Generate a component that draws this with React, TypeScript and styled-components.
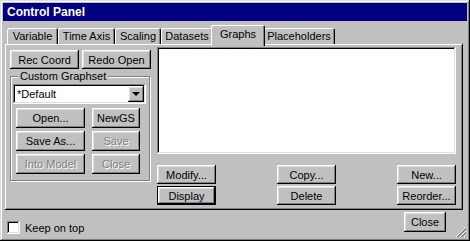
import styled, { createGlobalStyle } from "styled-components";

const GlobalStyle = createGlobalStyle`
  html, body {
    margin: 0;
    padding: 0;
    background: #c0c0c0;
  }
  body {
    font-family: "Liberation Sans", Arial, sans-serif;
    font-size: 11px;
    color: #000;
  }
`;

const raised = `
  box-shadow: inset -1px -1px #000, inset 1px 1px #fff, inset -2px -2px #808080, inset 2px 2px #dfdfdf;
`;

const sunken = `
  box-shadow: inset -1px -1px #fff, inset 1px 1px #808080, inset -2px -2px #dfdfdf, inset 2px 2px #000;
`;

const Window = styled.div`
  position: relative;
  width: 470px;
  height: 241px;
  box-sizing: border-box;
  padding: 3px;
  background: #c0c0c0;
  box-shadow: inset -1px -1px #000, inset 1px 1px #dfdfdf, inset -2px -2px #808080, inset 2px 2px #fff;
  display: flex;
  flex-direction: column;
`;

const TitleBar = styled.div`
  height: 18px;
  background: #000080;
  color: #fff;
  font-weight: bold;
  font-size: 12px;
  line-height: 18px;
  padding-left: 4px;
`;

const TabRow = styled.div`
  display: flex;
  align-items: flex-end;
  height: 21px;
  margin-top: 2px;
  padding-left: 4px;
`;

const Tab = styled.div<{ $w: number; $active?: boolean }>`
  position: relative;
  box-sizing: border-box;
  width: ${(p) => p.$w + (p.$active ? 4 : 0)}px;
  height: ${(p) => (p.$active ? 21 : 16)}px;
  margin: ${(p) => (p.$active ? "0 -2px -2px" : "0")};
  z-index: ${(p) => (p.$active ? 1 : 0)};
  background: #c0c0c0;
  border-radius: 2px 2px 0 0;
  box-shadow: inset 1px 1px #fff, inset -1px 0 #000, inset -2px 0 #808080;
  text-align: center;
  line-height: ${(p) => (p.$active ? 18 : 16)}px;
  white-space: nowrap;
`;

const Panel = styled.div`
  height: 166px;
  margin: 0 4px 0 2px;
  box-sizing: border-box;
  padding: 3px 7px 0 5px;
  display: flex;
  align-items: flex-start;
  box-shadow: inset -1px -1px #000, inset 1px 1px #fff, inset -2px -2px #808080;
`;

const LeftCol = styled.div`
  width: 141px;
  padding-top: 3px;
`;

const RightCol = styled.div`
  width: 299px;
  margin-left: 6px;
`;

const Row = styled.div<{ $gap: number }>`
  display: flex;
  gap: ${(p) => p.$gap}px;
`;

const Button = styled.button<{ $w: number; $h?: number; $default?: boolean }>`
  width: ${(p) => p.$w}px;
  height: ${(p) => p.$h ?? 19}px;
  padding: 0;
  border: none;
  background: #c0c0c0;
  font: inherit;
  color: #000;
  white-space: nowrap;
  ${(p) =>
    p.$default
      ? "box-shadow: inset 0 0 0 1px #000, inset -2px -2px #000, inset 2px 2px #fff, inset -3px -3px #808080, inset 3px 3px #dfdfdf;"
      : raised}
  &:disabled {
    color: #808080;
    text-shadow: 1px 1px 0 #fff;
  }
`;

const GroupBox = styled.div`
  position: relative;
  width: 138px;
  height: 103px;
  margin-top: 7px;
  border: 1px solid #808080;
  box-shadow: inset 1px 1px #fff, 1px 1px #fff;
`;

const Legend = styled.span`
  position: absolute;
  top: -7px;
  left: 7px;
  padding: 0 2px;
  background: #c0c0c0;
  line-height: 13px;
`;

const Combo = styled.div`
  width: 133px;
  height: 20px;
  margin: 7px 0 0 2px;
  box-sizing: border-box;
  background: #fff;
  ${sunken}
  display: flex;
  align-items: center;
  padding: 0 2px 0 4px;
`;

const ComboText = styled.span`
  flex: 1;
`;

const ComboButton = styled.div`
  width: 16px;
  height: 16px;
  background: #c0c0c0;
  ${raised}
  display: flex;
  align-items: center;
  justify-content: center;
`;

const Arrow = styled.div`
  width: 0;
  height: 0;
  border-left: 4px solid transparent;
  border-right: 4px solid transparent;
  border-top: 4px solid #000;
`;

const GroupGrid = styled.div`
  display: grid;
  grid-template-columns: 69px 48px;
  grid-auto-rows: 20px;
  column-gap: 7px;
  row-gap: 3px;
  margin: 4px 0 0 5px;
`;

const ListBox = styled.div`
  height: 107px;
  background: #fff;
  ${sunken}
`;

const ActionGrid = styled.div`
  display: grid;
  grid-template-columns: 59px 59px 59px;
  grid-template-rows: 19px 19px;
  justify-content: space-between;
  row-gap: 2px;
  margin-top: 11px;
`;

const Footer = styled.div`
  flex: 1;
  display: flex;
  align-items: flex-start;
  padding: 0 21px 0 4px;
`;

const CheckLabel = styled.label`
  display: flex;
  align-items: center;
  gap: 5px;
  margin-top: 11px;
`;

const CheckBox = styled.span`
  width: 13px;
  height: 13px;
  background: #fff;
  ${sunken}
`;

const CloseButton = styled(Button)`
  margin: 2px 0 0 auto;
`;

const Grip = styled.svg`
  position: absolute;
  right: 3px;
  bottom: 3px;
`;

const tabs = [
  { label: "Variable", w: 51 },
  { label: "Time Axis", w: 57 },
  { label: "Scaling", w: 46 },
  { label: "Datasets", w: 52 },
  { label: "Graphs", w: 50, active: true },
  { label: "Placeholders", w: 72 },
];

export default function App() {
  return (
    <>
      <GlobalStyle />
      <Window>
        <TitleBar>Control Panel</TitleBar>
        <TabRow>
          {tabs.map((t) => (
            <Tab key={t.label} $w={t.w} $active={t.active}>
              {t.label}
            </Tab>
          ))}
        </TabRow>
        <Panel>
          <LeftCol>
            <Row $gap={3}>
              <Button $w={69}>Rec Coord</Button>
              <Button $w={69}>Redo Open</Button>
            </Row>
            <GroupBox>
              <Legend>Custom Graphset</Legend>
              <Combo>
                <ComboText>*Default</ComboText>
                <ComboButton>
                  <Arrow />
                </ComboButton>
              </Combo>
              <GroupGrid>
                <Button $w={69} $h={20}>Open...</Button>
                <Button $w={48} $h={20}>NewGS</Button>
                <Button $w={69} $h={20}>Save As...</Button>
                <Button $w={48} $h={20} disabled>Save</Button>
                <Button $w={69} $h={20} disabled>Into Model</Button>
                <Button $w={48} $h={20} disabled>Close</Button>
              </GroupGrid>
            </GroupBox>
          </LeftCol>
          <RightCol>
            <ListBox />
            <ActionGrid>
              <Button $w={59}>Modify...</Button>
              <Button $w={59}>Copy...</Button>
              <Button $w={59}>New...</Button>
              <Button $w={59} $default>Display</Button>
              <Button $w={59}>Delete</Button>
              <Button $w={59}>Reorder...</Button>
            </ActionGrid>
          </RightCol>
        </Panel>
        <Footer>
          <CheckLabel>
            <CheckBox />
            Keep on top
          </CheckLabel>
          <CloseButton $w={42} $h={20}>Close</CloseButton>
        </Footer>
        <Grip width="12" height="12" viewBox="0 0 12 12">
          <path d="M11 1 L1 11 M11 5 L5 11 M11 9 L9 11" stroke="#fff" strokeWidth="1" />
          <path d="M11 2 L2 11 M11 3 L3 11 M11 6 L6 11 M11 7 L7 11 M11 10 L10 11" stroke="#808080" strokeWidth="1" />
        </Grip>
      </Window>
    </>
  );
}
